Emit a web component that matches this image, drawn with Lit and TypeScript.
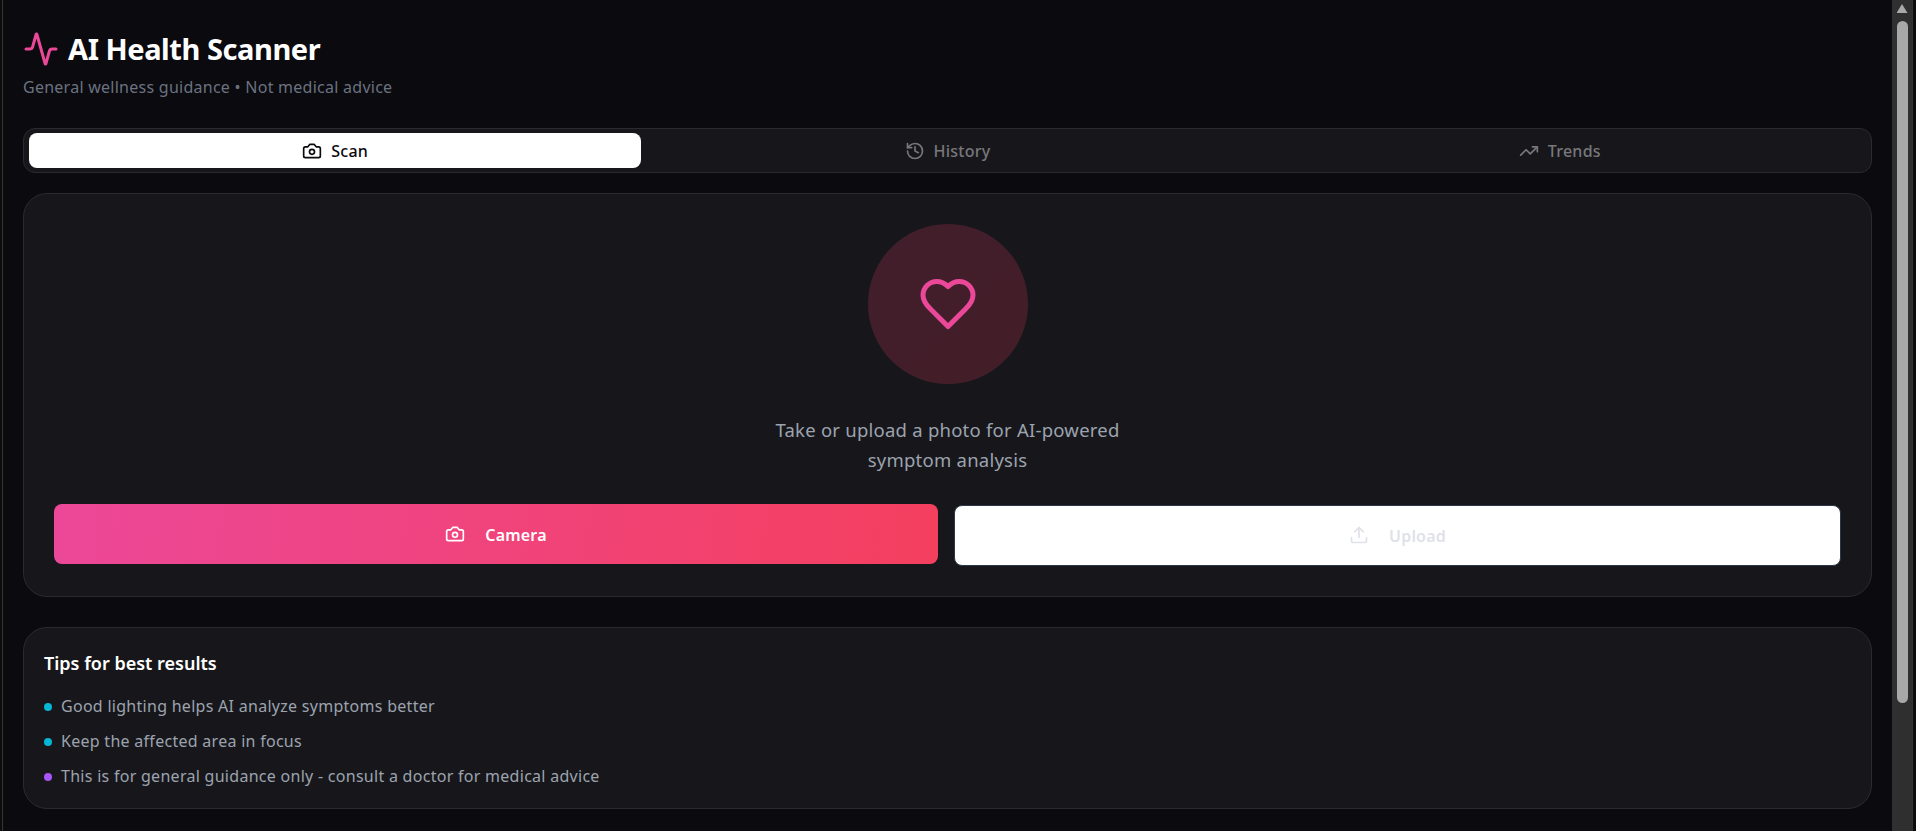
import { LitElement, html, css, svg } from "lit";
import { customElement } from "lit/decorators.js";

const icon = (paths: unknown, size: number, width = 2) => html`<svg class="ic" width=${size} height=${size} viewBox="0 0 24 24" fill="none" stroke="currentColor" stroke-width=${width} stroke-linecap="round" stroke-linejoin="round">${paths}</svg>`;

const camera = svg`<path d="M14.5 4h-5L7 7H4a2 2 0 0 0-2 2v9a2 2 0 0 0 2 2h16a2 2 0 0 0 2-2V9a2 2 0 0 0-2-2h-3l-2.5-3z"/><circle cx="12" cy="13" r="3"/>`;
const history = svg`<path d="M3 12a9 9 0 1 0 9-9 9.75 9.75 0 0 0-6.74 2.74L3 8"/><path d="M3 3v5h5"/><path d="M12 7v5l4 2"/>`;
const trending = svg`<polyline points="22 7 13.5 15.5 8.5 10.5 2 17"/><polyline points="16 7 22 7 22 13"/>`;
const upload = svg`<path d="M21 15v4a2 2 0 0 1-2 2H5a2 2 0 0 1-2-2v-4"/><polyline points="17 8 12 3 7 8"/><line x1="12" x2="12" y1="3" y2="15"/>`;
const heart = svg`<path d="M19 14c1.49-1.46 3-3.21 3-5.5A5.5 5.5 0 0 0 16.5 3c-1.76 0-3 .5-4.5 2-1.5-1.5-2.74-2-4.5-2A5.5 5.5 0 0 0 2 8.5c0 2.3 1.5 4.05 3 5.5l7 7Z"/>`;
const activity = svg`<path d="M22 12h-2.48a2 2 0 0 0-1.93 1.46l-2.35 8.36a.25.25 0 0 1-.48 0L9.24 2.18a.25.25 0 0 0-.48 0l-2.35 8.36A2 2 0 0 1 4.49 12H2"/>`;

@customElement("app-root")
export class AppRoot extends LitElement {
  static styles = css`
    :host {
      display: flex;
      height: 831px;
      overflow: hidden;
      background: #0a0a0f;
      font-family: "Noto Sans", "Open Sans", sans-serif;
      color: #fff;
    }
    * { box-sizing: border-box; }
    .ic { display: block; flex: none; }
    .edge-left { width: 3px; background: #0c0c0c; border-right: 1px solid #343434; flex: none; }
    .edge-right { width: 4px; background: #0c0c0c; border-left: 1px solid #343434; flex: none; }
    .bar {
      width: 20px;
      flex: none;
      background: #2f2f2f;
      display: flex;
      flex-direction: column;
      align-items: center;
    }
    .arrow {
      width: 11px;
      height: 9px;
      margin-top: 4px;
      background: #a8a8a8;
      clip-path: polygon(50% 0, 100% 100%, 0 100%);
    }
    .thumb {
      width: 11px;
      height: 682px;
      margin-top: 8px;
      background: #a8a8a8;
      border-radius: 6px;
    }
    main { flex: 1; min-width: 0; padding: 31px 20px 0; }
    .title { display: flex; align-items: center; gap: 9px; height: 36px; }
    .title .ic { color: #ec4899; }
    h1 { margin: 0; font-size: 29px; line-height: 36px; font-weight: 700; letter-spacing: -0.44px; }
    .sub { margin: 9px 0 0; font-size: 16px; line-height: 22px; letter-spacing: 0.26px; color: #6b7280; }
    .tabs {
      margin-top: 30px;
      display: grid;
      grid-template-columns: repeat(3, 1fr);
      height: 45px;
      padding: 4px 5px;
      border: 1px solid #2a2a30;
      border-radius: 12px;
      background: #17171b;
    }
    .tab {
      display: flex;
      align-items: center;
      justify-content: center;
      gap: 9px;
      padding-top: 1px;
      font-size: 16px;
      font-weight: 500;
      letter-spacing: 0.25px;
      color: #77777c;
      border-radius: 8px;
    }
    .tab .ic { margin-top: -1px; }
    .tab.on { background: #fff; color: #0a0a0f; }
    .card {
      border: 1px solid #2a2a30;
      background: #17171b;
      border-radius: 24px;
    }
    .scan {
      margin-top: 20px;
      height: 404px;
      padding: 30px;
      display: flex;
      flex-direction: column;
      align-items: center;
    }
    .circle {
      width: 160px;
      height: 160px;
      border-radius: 50%;
      background: linear-gradient(135deg, #421e2c, #431e28);
      color: #ec4899;
      display: flex;
      align-items: center;
      justify-content: center;
    }
    .lead {
      margin: 31px 0 0;
      width: 384px;
      text-align: center;
      font-size: 18.5px;
      line-height: 30px;
      letter-spacing: 0.235px;
      color: #9ca3af;
    }
    .actions {
      margin-top: 29px;
      align-self: stretch;
      display: grid;
      grid-template-columns: 884fr 887fr;
      gap: 16px;
      align-items: start;
    }
    .btn {
      display: flex;
      align-items: center;
      justify-content: center;
      gap: 20px;
      border-radius: 8px;
      font-size: 16px;
      font-weight: 600;
      letter-spacing: 0.2px;
    }
    .btn .ic { margin-top: -2px; }
    .camera {
      height: 60px;
      padding-top: 2px;
      background: linear-gradient(96deg, #ec4899, #f43f5e);
      color: #fff;
    }
    .upload {
      height: 61px;
      margin-top: 1px;
      padding-top: 1px;
      background: #fff;
      border: 1px solid #2b3648;
      color: #dfe2e8;
    }
    .tips {
      margin-top: 30px;
      height: 182px;
      padding: 22px 20px 0;
    }
    h2 { margin: 0 0 18px; font-size: 18px; line-height: 27px; font-weight: 600; }
    ul { margin: 0; padding: 0; list-style: none; display: flex; flex-direction: column; gap: 12px; }
    li {
      display: flex;
      align-items: center;
      gap: 9px;
      font-size: 16px;
      line-height: 23px;
      letter-spacing: 0.28px;
      color: #9ca3af;
    }
    .dot { width: 8px; height: 8px; border-radius: 50%; flex: none; }
    .cyan { background: #06b6d4; }
    .purple { background: #a855f7; }
  `;

  render() {
    return html`
      <div class="edge-left"></div>
      <main>
        <header>
          <div class="title">${icon(activity, 36)}<h1>AI Health Scanner</h1></div>
          <p class="sub">General wellness guidance • Not medical advice</p>
        </header>
        <nav class="tabs">
          <div class="tab on">${icon(camera, 20)}Scan</div>
          <div class="tab">${icon(history, 20)}History</div>
          <div class="tab">${icon(trending, 20)}Trends</div>
        </nav>
        <section class="card scan">
          <div class="circle">${icon(heart, 60)}</div>
          <p class="lead">Take or upload a photo for AI-powered symptom analysis</p>
          <div class="actions">
            <div class="btn camera">${icon(camera, 20)}Camera</div>
            <div class="btn upload">${icon(upload, 20)}Upload</div>
          </div>
        </section>
        <section class="card tips">
          <h2>Tips for best results</h2>
          <ul>
            <li><span class="dot cyan"></span>Good lighting helps AI analyze symptoms better</li>
            <li><span class="dot cyan"></span>Keep the affected area in focus</li>
            <li><span class="dot purple"></span>This is for general guidance only - consult a doctor for medical advice</li>
          </ul>
        </section>
      </main>
      <div class="bar"><div class="arrow"></div><div class="thumb"></div></div>
      <div class="edge-right"></div>
    `;
  }
}
